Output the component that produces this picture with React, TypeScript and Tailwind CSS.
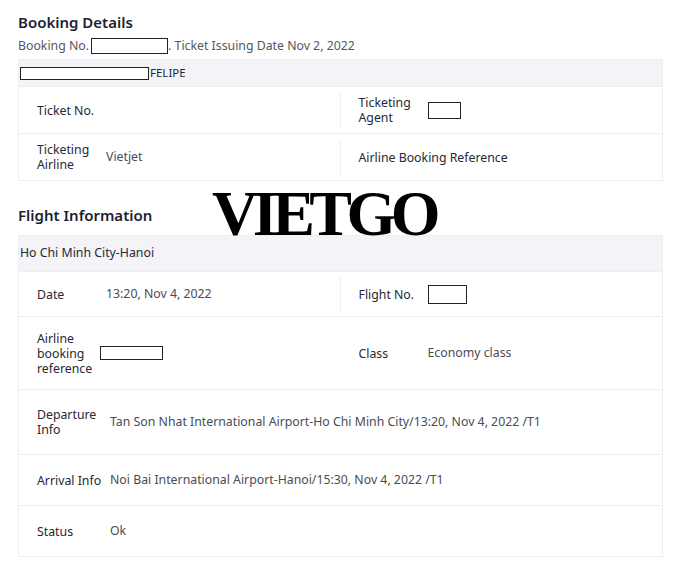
import React from 'react';

const font = { fontFamily: '"Noto Sans", "Open Sans", sans-serif' };

function Redact({ className }: { className: string }) {
  return <span className={`inline-block bg-white border border-[#222] align-middle ${className}`} />;
}

function Cell({ label, labelW, children, divider }: { label: React.ReactNode; labelW: string; children?: React.ReactNode; divider?: boolean }) {
  return (
    <div className="relative flex flex-1 items-center pl-[18px]">
      <div className={`${labelW} shrink-0 text-[12.3px] leading-[15px] text-[#262833]`}>{label}</div>
      <div className="text-[12.3px] text-[#4a4c55]">{children}</div>
      {divider && <div className="absolute right-0 top-[5px] bottom-[5px] w-px bg-[#eeeef0]" />}
    </div>
  );
}

export default function App() {
  return (
    <div className="relative bg-white w-[700px] h-[573px] pl-[18px] pt-[11px]" style={font}>
      <h2 className="text-[15px] font-semibold text-[#1d1f33] leading-[22px]">Booking Details</h2>
      <div className="mt-[4px] flex items-center text-[12.3px] text-[#55575f] leading-[18px]">
        Booking No.<Redact className="w-[77px] h-[16px] ml-[2px]" />. Ticket Issuing Date Nov 2, 2022
      </div>

      <div className="mt-[4px] w-[645px] border border-[#eeeef0]">
        <div className="h-[26px] bg-[#f4f4f8] flex items-center pl-[1px] text-[11.5px] text-[#262833]">
          <Redact className="w-[129px] h-[13px]" />
          <span className="ml-[1px]">FELIPE</span>
        </div>
        <div className="flex h-[47px] border-t border-[#eeeef0]">
          <Cell label="Ticket No." labelW="w-[69px]" divider />
          <Cell label={<>Ticketing<br />Agent</>} labelW="w-[69px]">
            <Redact className="w-[33px] h-[17px]" />
          </Cell>
        </div>
        <div className="flex h-[47px] border-t border-[#eeeef0]">
          <Cell label={<>Ticketing<br />Airline</>} labelW="w-[69px]" divider>Vietjet</Cell>
          <Cell label="Airline Booking Reference" labelW="w-auto" />
        </div>
      </div>

      <h2 className="mt-[23px] text-[15px] font-semibold text-[#1d1f33] leading-[22px]">Flight Information</h2>

      <div className="mt-[9px] w-[645px] border border-[#eeeef0]">
        <div className="h-[35px] bg-[#f4f4f8] flex items-center pl-[1px] text-[12.3px] text-[#262833]">
          Ho Chi Minh City-Hanoi
        </div>
        <div className="flex h-[45px] border-t border-[#eeeef0]">
          <Cell label="Date" labelW="w-[69px]" divider>13:20, Nov 4, 2022</Cell>
          <Cell label="Flight No." labelW="w-[69px]">
            <Redact className="w-[39px] h-[19px]" />
          </Cell>
        </div>
        <div className="flex h-[73px] border-t border-[#eeeef0]">
          <Cell label={<>Airline<br />booking<br />reference</>} labelW="w-[63px]">
            <Redact className="w-[63px] h-[14px]" />
          </Cell>
          <Cell label="Class" labelW="w-[69px]">Economy class</Cell>
        </div>
        <div className="flex h-[65px] border-t border-[#eeeef0]">
          <Cell label={<>Departure<br />Info</>} labelW="w-[73px]">
            Tan Son Nhat International Airport-Ho Chi Minh City/13:20, Nov 4, 2022 /T1
          </Cell>
        </div>
        <div className="flex h-[51px] border-t border-[#eeeef0]">
          <Cell label="Arrival Info" labelW="w-[73px]">
            Noi Bai International Airport-Hanoi/15:30, Nov 4, 2022 /T1
          </Cell>
        </div>
        <div className="flex h-[51px] border-t border-[#eeeef0]">
          <Cell label="Status" labelW="w-[73px]">Ok</Cell>
        </div>
      </div>

      <div
        className="absolute left-[212px] top-[182px] text-[64px] font-bold text-black leading-[64px] tracking-[-5.5px]"
        style={{ fontFamily: '"Liberation Serif", serif' }}
      >
        VIETGO
      </div>
    </div>
  );
}
